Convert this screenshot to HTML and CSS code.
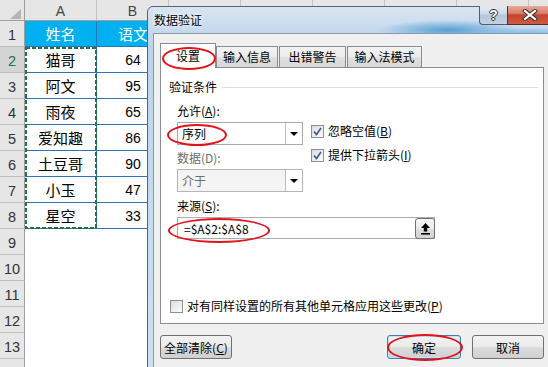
FILE: index.html
```html
<!DOCTYPE html>
<html lang="zh-CN">
<head>
  <meta charset="UTF-8">
  <title>数据验证</title>
  <link rel="stylesheet" href="styles.css">
</head>
<body>
  <div class="screen">
    <!-- worksheet behind the dialog -->
    <div class="sheet">
      <div class="row head">
        <div class="corner">
          <svg width="24" height="20" viewBox="0 0 24 20"><polygon points="21,9 21,19 10,19" fill="#b5b5b5"/></svg>
        </div>
        <div class="col">A</div>
        <div class="col">B</div>
        <div class="col"></div>
        <div class="col"></div>
        <div class="col"></div>
        <div class="col"></div>
        <div class="col"></div>
        <div class="col"></div>
      </div>
      <div class="row">
        <div class="rh">1</div>
        <div class="cell th first">姓名</div>
        <div class="cell th">语文</div>
      </div>
      <div class="row">
        <div class="rh active">2</div>
        <div class="cell td first">猫哥</div>
        <div class="cell td num">64</div>
      </div>
      <div class="row">
        <div class="rh">3</div>
        <div class="cell td first">阿文</div>
        <div class="cell td num">95</div>
      </div>
      <div class="row">
        <div class="rh">4</div>
        <div class="cell td first">雨夜</div>
        <div class="cell td num">65</div>
      </div>
      <div class="row">
        <div class="rh">5</div>
        <div class="cell td first">爱知趣</div>
        <div class="cell td num">86</div>
      </div>
      <div class="row">
        <div class="rh">6</div>
        <div class="cell td first">土豆哥</div>
        <div class="cell td num">90</div>
      </div>
      <div class="row">
        <div class="rh">7</div>
        <div class="cell td first">小玉</div>
        <div class="cell td num">47</div>
      </div>
      <div class="row">
        <div class="rh">8</div>
        <div class="cell td first">星空</div>
        <div class="cell td num">33</div>
      </div>
      <div class="row"><div class="rh">9</div></div>
      <div class="row"><div class="rh">10</div></div>
      <div class="row"><div class="rh">11</div></div>
      <div class="row"><div class="rh">12</div></div>
      <div class="row"><div class="rh">13</div></div>
      <div class="row"><div class="rh"></div></div>
    </div>

    <!-- copy marquee around A2:A8 -->
    <svg class="ants" width="72" height="182" viewBox="0 0 72 182">
      <rect x="1" y="1" width="70" height="180" fill="none" stroke="#217346" stroke-width="2" stroke-dasharray="4 2"/>
    </svg>

    <!-- data validation dialog -->
    <div class="dialog">
      <div class="titlebar">
        <span class="title">数据验证</span>
        <div class="caption-btns">
          <div class="cbtn help">?</div>
          <div class="cbtn close">
            <svg width="16" height="12" viewBox="0 0 16 12">
              <path d="M3 2 L13 10 M13 2 L3 10" stroke="#3a3a3a" stroke-width="4.2" stroke-linecap="square"/>
              <path d="M3 2 L13 10 M13 2 L3 10" stroke="#fff" stroke-width="2.2" stroke-linecap="square"/>
            </svg>
          </div>
        </div>
      </div>

      <div class="client">
        <div class="tabs">
          <div class="tab selected">设置<span class="ring ring-tab"></span></div>
          <div class="tab t2">输入信息</div>
          <div class="tab t3">出错警告</div>
          <div class="tab t4">输入法模式</div>
        </div>

        <div class="panel">
          <div class="group-title">
            <span>验证条件</span>
            <span class="group-line"></span>
          </div>

          <div class="criteria">
            <div class="label">允许(<u>A</u>):</div>
            <div class="criteria-row">
              <div class="left">
                <div class="combo">
                  <span class="combo-text">序列</span>
                  <span class="drop"><span class="arrow"></span></span>
                  <span class="ring ring-combo"></span>
                </div>
                <div class="label disabled gap-label">数据(D):</div>
                <div class="combo off">
                  <span class="combo-text">介于</span>
                  <span class="drop"><span class="arrow"></span></span>
                </div>
              </div>
              <div class="right">
                <label class="check">
                  <span class="box on">
                    <svg width="11" height="11" viewBox="0 0 11 11"><path d="M2 5.5 L4.5 8.5 L9 2" fill="none" stroke="#4a5c93" stroke-width="1.7"/></svg>
                  </span>
                  <span>忽略空值(<u>B</u>)</span>
                </label>
                <label class="check">
                  <span class="box on">
                    <svg width="11" height="11" viewBox="0 0 11 11"><path d="M2 5.5 L4.5 8.5 L9 2" fill="none" stroke="#4a5c93" stroke-width="1.7"/></svg>
                  </span>
                  <span>提供下拉箭头(<u>I</u>)</span>
                </label>
              </div>
            </div>

            <div class="label source-label">来源(<u>S</u>):</div>
            <div class="source">
              <span class="source-text">=$A$2:$A$8</span>
              <span class="refbtn">
                <svg width="11" height="13" viewBox="0 0 11 13">
                  <path d="M5.5 1 L10 6 L7.2 6 L7.2 9.5 L3.8 9.5 L3.8 6 L1 6 Z" fill="#000"/>
                  <rect x="1" y="11" width="9" height="1.6" fill="#000"/>
                </svg>
              </span>
              <span class="ring ring-source"></span>
            </div>
          </div>

          <label class="check apply">
            <span class="box"></span>
            <span>对有同样设置的所有其他单元格应用这些更改(<u>P</u>)</span>
          </label>
        </div>

        <div class="buttons">
          <div class="btn"><span>全部清除(<u>C</u>)</span></div>
          <div class="spacer"></div>
          <div class="btn default">确定<span class="ring ring-ok"></span></div>
          <div class="btn">取消</div>
        </div>
      </div>
    </div>
  </div>
</body>
</html>
```

FILE: styles.css
```css
/* page frame */
body {
  margin: 0;
  padding: 0;
  background: #fff;
  font-family: 'Noto Sans CJK SC', sans-serif;
  overflow: hidden;
}

.screen {
  position: relative;
  width: 548px;
  height: 367px;
  overflow: hidden;
  background: #fff;
}

/* ---------- worksheet ---------- */
.sheet {
  display: flex;
  flex-direction: column;
}

.row {
  display: flex;
  height: 26px;
}

.row.head {
  height: 21px;
}

.corner,
.col,
.rh {
  box-sizing: border-box;
  background: #e6e6e6;
  color: #444;
  font-family: 'Liberation Sans', Arial, sans-serif;
  font-size: 14px;
  display: flex;
  align-items: center;
  justify-content: center;
  flex: none;
}

.corner {
  width: 25px;
  border-right: 1px solid #9f9f9f;
  border-bottom: 1px solid #9f9f9f;
}

.col {
  width: 72px;
  border-right: 1px solid #c4c4c4;
  border-bottom: 1px solid #9f9f9f;
  padding-top: 1px;
}

.rh {
  width: 25px;
  border-right: 1px solid #9f9f9f;
  border-bottom: 1px solid #bdbdbd;
  padding-top: 3px;
  font-size: 14.5px;
  color: #333;
}

.rh.active {
  background: #d4d4d4;
  color: #217346;
}

.cell {
  box-sizing: border-box;
  width: 72px;
  flex: none;
  display: flex;
  align-items: center;
  justify-content: center;
  font-size: 15px;
  color: #000;
  border-bottom: 1px solid #2e75b6;
}

.cell.first {
  border-right: 1px solid #2e75b6;
}

.cell.th {
  background: #00b0f0;
  color: #fff;
}

.cell.num {
  font-family: 'Liberation Sans', Arial, sans-serif;
  font-size: 14px;
}

.ants {
  position: absolute;
  left: 25px;
  top: 47px;
}

/* ---------- dialog ---------- */
.dialog {
  position: absolute;
  left: 147px;
  top: 6px;
  width: 410px;
  height: 380px;
  box-sizing: border-box;
  border: 1px solid #54657a;
  border-radius: 6px 6px 0 0;
  padding: 0 5px;
  display: flex;
  flex-direction: column;
  background:
    radial-gradient(ellipse 70px 10px at 300px 23px, rgba(46, 140, 205, 0.75), rgba(46, 140, 205, 0) 100%),
    radial-gradient(ellipse 60px 7px at 380px 27px, rgba(90, 170, 225, 0.7), rgba(90, 170, 225, 0) 100%),
    linear-gradient(180deg, #d9e5f1 0px, #c8dbee 20px, #bcd4ec 40px, #c6dbef 200px, #cfe1f2 380px);
}

.titlebar {
  height: 26px;
  display: flex;
  align-items: flex-start;
  flex: none;
}

.title {
  font-size: 12px;
  line-height: 26px;
  color: #000;
  padding-left: 1px;
  text-shadow: 0 0 6px #fff, 0 0 3px #fff;
}

.caption-btns {
  display: flex;
  margin-left: auto;
  margin-top: -1px;
  margin-right: -2px;
}

.cbtn {
  height: 19px;
  box-sizing: border-box;
  display: flex;
  align-items: center;
  justify-content: center;
  border: 1px solid #4e5d70;
  border-top: none;
}

.help {
  width: 28px;
  border-right: none;
  border-radius: 0 0 0 4px;
  background: linear-gradient(180deg, #e4ecf4 0%, #ccd9e7 45%, #b4c6d9 50%, #c2d3e4 100%);
  color: #fff;
  font-family: 'Liberation Sans', Arial, sans-serif;
  font-weight: bold;
  font-size: 14px;
  text-shadow: 1px 0 0 #333, -1px 0 0 #333, 0 1px 0 #333, 0 -1px 0 #333;
}

.close {
  width: 46px;
  border-radius: 0 0 4px 0;
  border-color: #5e2a23;
  background: linear-gradient(180deg, #e8a797 0%, #d9806c 40%, #c5432e 50%, #cd5c41 100%);
}

.client {
  flex: 1;
  background: #f0f0f0;
  border: 1px solid #8699ad;
  border-bottom: none;
  padding: 9px 6px 0 6px;
  font-size: 12px;
  color: #000;
}

/* tabs */
.tabs {
  display: flex;
  align-items: flex-end;
  height: 24px;
  position: relative;
  z-index: 1;
}

.tab {
  position: relative;
  box-sizing: border-box;
  height: 21px;
  line-height: 19px;
  border: 1px solid #898c95;
  border-bottom: none;
  background: linear-gradient(180deg, #f3f3f3 0%, #ebebeb 50%, #e0e0e0 51%, #d8d8d8 100%);
  text-align: center;
  flex: none;
}

.tab.selected {
  width: 56px;
  height: 25px;
  margin-bottom: -1px;
  background: #fff;
  line-height: 23px;
}

.tab.t2 {
  width: 62px;
}

.tab.t3 {
  width: 67px;
  margin-left: 1px;
}

.tab.t4 {
  width: 75px;
  margin-left: 1px;
}

/* red ellipses drawn over controls */
.ring {
  position: absolute;
  box-sizing: border-box;
  border: 2px solid #e3121b;
  border-radius: 50%;
  pointer-events: none;
}

.ring-tab {
  left: 1px;
  top: 3px;
  width: 54px;
  height: 23px;
}

.ring-combo {
  left: -11px;
  top: 1px;
  width: 60px;
  height: 22px;
}

.ring-source {
  left: -10px;
  top: 0;
  width: 102px;
  height: 25px;
}

.ring-ok {
  left: -1px;
  top: -2px;
  width: 76px;
  height: 27px;
}

/* tab page */
.panel {
  box-sizing: border-box;
  height: 257px;
  background: #fff;
  border: 1px solid #898c95;
  display: flex;
  flex-direction: column;
}

.group-title {
  display: flex;
  align-items: center;
  margin-top: 11px;
  padding-left: 8px;
  line-height: 16px;
}

.group-line {
  flex: 1;
  height: 1px;
  background: #d5dfe5;
  margin: 0 5px 0 5px;
}

.criteria {
  padding-left: 16px;
}

.label {
  line-height: 16px;
  margin-top: 8px;
}

.label.disabled {
  color: #6d6d6d;
}

.gap-label {
  margin-top: 5px;
}

.source-label {
  margin-top: 6px;
}

.label u,
.check u,
.btn u {
  text-underline-offset: 1px;
}

.criteria-row {
  display: flex;
  margin-top: 3px;
}

.left {
  width: 126px;
}

.combo {
  position: relative;
  box-sizing: border-box;
  height: 23px;
  border: 1px solid #a9a9a9;
  background: #fff;
  display: flex;
  align-items: center;
}

.combo + .label {
  margin-top: 5px;
}

.combo.off {
  margin-top: 3px;
  background: #f4f4f4;
  border-color: #b5b5b5;
  color: #6d6d6d;
}

.combo-text {
  flex: 1;
  padding-left: 4px;
}

.drop {
  box-sizing: border-box;
  width: 17px;
  height: 21px;
  border-left: 1px solid #bcbcbc;
  background: #fff;
  display: flex;
  align-items: center;
  justify-content: center;
}

.arrow {
  width: 0;
  height: 0;
  border-left: 4px solid transparent;
  border-right: 4px solid transparent;
  border-top: 4px solid #000;
  margin-top: 1px;
}

.right {
  margin-left: 8px;
  padding-top: 1px;
  display: flex;
  flex-direction: column;
  gap: 8px;
}

.check {
  display: flex;
  align-items: center;
  gap: 4px;
  line-height: 16px;
}

.box {
  box-sizing: border-box;
  width: 13px;
  height: 13px;
  border: 1px solid #8e8f8f;
  background: linear-gradient(135deg, #dcdcdc 0%, #f3f3f3 70%, #fbfbfb 100%);
  display: flex;
  align-items: center;
  justify-content: center;
  flex: none;
}

.source {
  position: relative;
  box-sizing: border-box;
  width: 258px;
  height: 22px;
  margin-top: 3px;
  border: 1px solid #abadb3;
  display: flex;
  align-items: center;
}

.source-text {
  flex: 1;
  padding-left: 6px;
}

.refbtn {
  box-sizing: border-box;
  width: 20px;
  height: 21px;
  border: 1px solid #707070;
  border-radius: 3px;
  margin-right: -1px;
  background: linear-gradient(180deg, #f6f6f6 0%, #ececec 50%, #dedede 51%, #d4d4d4 100%);
  display: flex;
  align-items: center;
  justify-content: center;
}

.check.apply {
  margin-top: auto;
  margin-bottom: 9px;
  padding-left: 9px;
}

/* bottom buttons */
.buttons {
  display: flex;
  margin-top: 11px;
  gap: 11px;
}

.spacer {
  flex: 1;
}

.btn {
  position: relative;
  box-sizing: border-box;
  width: 72px;
  height: 24px;
  border: 1px solid #707070;
  border-radius: 3px;
  background: linear-gradient(180deg, #f2f2f2 0%, #ebebeb 49%, #dddddd 50%, #cfcfcf 100%);
  display: flex;
  align-items: center;
  justify-content: center;
}

.btn.default {
  width: 74px;
  border-color: #3c7fb1;
  box-shadow: inset 0 0 0 1px #bfe3f9;
}
```
